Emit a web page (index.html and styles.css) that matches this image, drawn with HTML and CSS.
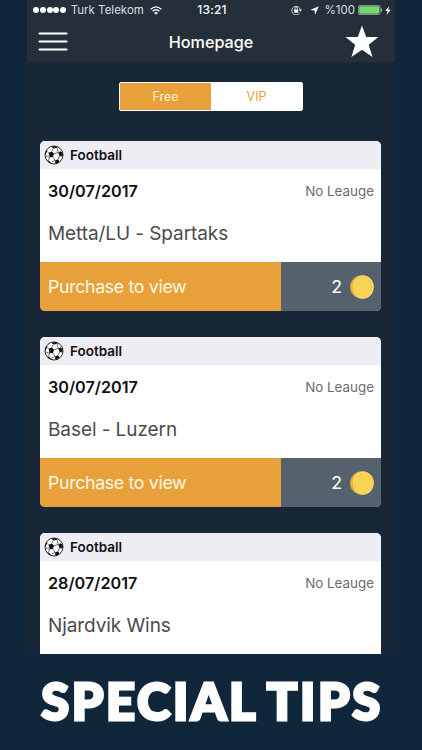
FILE: index.html
```
<!DOCTYPE html>
<html lang="en">
<head>
<meta charset="utf-8">
<title>Homepage</title>
<link rel="stylesheet" href="styles.css">
</head>
<body>
<svg class="defs" aria-hidden="true">
  <symbol id="ball" viewBox="0 0 20 20">
    <circle cx="10" cy="10" r="9" fill="#fff" stroke="#111" stroke-width=".9"/>
    <path d="M4.6 7.8 7.8 6.6 10 8.8 9 12.1 5.6 12.2ZM8.2 1.2 12.6 1.2 13.6 2.4 10.6 3.6 8 2.4ZM1.2 8.4 2.2 5.6 3.2 4.4 3 6.6 1.4 10ZM3 15.4 5.4 16 7.4 18.6 5 17.6ZM11 15.4 14 14.2 15.4 16.2 13.4 18.4 11.2 18ZM14.2 7.4 16.8 6.2 18.8 8.6 18.4 11.4 15.6 11Z" fill="#111"/>
    <path d="M7.8 6.6 9.4 3.2M3 6.2 4.6 7.8M1.6 11 5.6 12.2 4.6 15.8M9 12.1 11 15.4 7 17.4M10 8.8 14.2 7.4 13 2.4M15.6 11 14 14.2" fill="none" stroke="#222" stroke-width=".65"/>
  </symbol>
  <symbol id="coin" viewBox="0 0 24 24">
    <circle cx="11.9" cy="12" r="11.8" fill="#e3b23c"/>
    <ellipse cx="13.2" cy="12" rx="10.5" ry="11.6" fill="#fadb61"/>
    <ellipse cx="13.2" cy="12" rx="8.6" ry="9.5" fill="#f8d455" stroke="#e2b548" stroke-width=".8" stroke-dasharray="1.2 1.4"/>
  </symbol>
</svg>
<div class="phone">
  <header class="top">
    <div class="status">
      <div class="carrier">
        <span class="dots"><i></i><i></i><i></i><i></i><i></i></span>
        <span class="network">Turk Telekom</span>
        <svg width="12" height="9" viewBox="0 0 12 9"><path d="M.7 3.2Q6-1.5 11.3 3.2M2.6 5.2Q6 2.2 9.4 5.2" fill="none" stroke="#fff" stroke-width="1.3"/><path d="M4.1 6.8Q6 5.2 7.9 6.8L6 8.8Z" fill="#fff"/></svg>
      </div>
      <span class="time">13:21</span>
      <div class="power">
        <svg width="12" height="10" viewBox="0 0 12 10"><path d="M8.8 7.8A4.3 4.3 0 1 1 9.3 4.8" fill="none" stroke="#ddd" stroke-width=".9"/><path d="M7.7 4.6h3.5L9.4 6.8Z" fill="#ddd"/><path d="M3.2 4.5h4v3.2h-4z" fill="#fff"/><path d="M4 4.8V3.6a1.2 1.2 0 0 1 2.4 0v1.2" fill="none" stroke="#fff" stroke-width=".8"/></svg>
        <svg class="arrow" width="9" height="9" viewBox="0 0 9 9"><path d="M8.8.2 5 8.8 4.6 4.4.2 4Z" fill="#fff"/></svg>
        <span class="percent">%100</span>
        <svg class="battery" width="25" height="10" viewBox="0 0 25 10"><rect x=".4" y=".4" width="21.6" height="9.2" rx="1.5" fill="none" stroke="#a9b2b5" stroke-width=".8"/><rect x="1.2" y="1.2" width="20" height="7.6" rx=".7" fill="#76d671"/><path d="M22.8 3.3q1.5.2 1.5 1.7t-1.5 1.7Z" fill="#a9b2b5"/></svg>
        <svg class="bolt" width="6" height="9" viewBox="0 0 6 9"><path d="M4 .2.3 5h2.2L1.7 8.8 5.7 3.8H3.3Z" fill="#fff"/></svg>
      </div>
    </div>
    <nav class="bar">
      <svg width="30" height="20" viewBox="0 0 30 20"><path d="M1.5 1.6h27M1.5 9.6h27M1.5 17.5h27" stroke="#fff" stroke-width="2" stroke-linecap="round"/></svg>
      <h1>Homepage</h1>
      <svg width="34" height="33" viewBox="0 0 34 33"><path d="M17 .5 21.2 12H33.5L23.7 19.7 27.5 32 17 24.7 6.4 32 10.2 19.7.5 12H12.8Z" fill="#fff"/></svg>
    </nav>
  </header>
  <main class="feed">
    <div class="tabs"><span class="tab active">Free</span><span class="tab">VIP</span></div>
    <article class="card">
      <div class="sport"><svg width="20" height="20"><use href="#ball"/></svg><span>Football</span></div>
      <div class="info"><div class="meta"><b>30/07/2017</b><span>No Leauge</span></div><h2>Metta/LU - Spartaks</h2></div>
      <div class="buy"><span class="label">Purchase to view</span><span class="price">2<svg width="24" height="24"><use href="#coin"/></svg></span></div>
    </article>
    <article class="card">
      <div class="sport"><svg width="20" height="20"><use href="#ball"/></svg><span>Football</span></div>
      <div class="info"><div class="meta"><b>30/07/2017</b><span>No Leauge</span></div><h2>Basel - Luzern</h2></div>
      <div class="buy"><span class="label">Purchase to view</span><span class="price">2<svg width="24" height="24"><use href="#coin"/></svg></span></div>
    </article>
    <article class="card">
      <div class="sport"><svg width="20" height="20"><use href="#ball"/></svg><span>Football</span></div>
      <div class="info"><div class="meta"><b>28/07/2017</b><span>No Leauge</span></div><h2>Njardvik Wins</h2></div>
    </article>
  </main>
</div>
<div class="caption">SPECIAL TIPS</div>
</body>
</html>
```
FILE: styles.css
```
* { box-sizing: border-box; }
body { margin: 0; width: 422px; height: 750px; overflow: hidden; background: #10263b; font-family: Inter, "Liberation Sans", sans-serif; color: #fff; }
svg { display: block; flex: none; }
.defs { display: none; }
.phone { width: 368px; height: 654px; margin-left: 27px; overflow: hidden; background: #182738; }
.top { height: 63px; background: #252f39; border-bottom: 1px solid #1d2934; }
.status { height: 20px; display: grid; grid-template-columns: 1fr auto 1fr; align-items: center; padding: 0 4px 0 6px; font-size: 12px; line-height: 20px; }
.carrier, .power { display: flex; align-items: center; }
.power { justify-content: flex-end; }
.dots { display: flex; gap: .8px; margin-right: 4.5px; }
.dots i { width: 6px; height: 6px; border-radius: 50%; background: #fff; }
.network { color: #d9dde0; margin-right: 6px; font-size: 11.5px; letter-spacing: 0; }
.time { font-weight: 500; font-size: 12px; letter-spacing: .2px; }
.arrow { margin: 0 6px 0 7px; }
.percent { color: #d9dde0; font-size: 11.5px; }
.battery { margin-left: 3px; }
.bolt { margin-left: 2px; }
.bar { height: 42px; display: grid; grid-template-columns: 34px 1fr 34px; align-items: center; padding: 1px 16px 0 11px; }
.bar h1 { margin: 0; text-align: center; font-size: 16.2px; font-weight: 500; padding-left: 5px; }
.feed { padding: 19px 14px 0 13px; }
.tabs { width: 184px; height: 29px; margin: 0 auto 30px 79px; display: flex; border: 1px solid #fff; border-radius: 2px; background: #fff; overflow: hidden; }
.tab { flex: 1; text-align: center; font-size: 12.5px; line-height: 28px; color: #e8a13a; }
.tab.active { background: #e8a13a; color: #fff3d9; }
.card { height: 170px; margin-bottom: 26px; border-radius: 5px; background: #fff; overflow: hidden; }
.sport { height: 28px; display: flex; align-items: center; gap: 6px; padding-left: 4px; background: #efedf4; color: #111; font-size: 13.5px; font-weight: 600; }
.info { height: 93px; padding: 11px 7px 0 8px; }
.meta { display: flex; justify-content: space-between; align-items: center; height: 22px; }
.meta b { color: #111; font-size: 16.2px; font-weight: 600; }
.meta span { color: #6c6c6c; font-size: 13.4px; }
.info h2 { margin: 18px 0 0; color: #4b4b4b; font-size: 19px; line-height: 28px; font-weight: 400; letter-spacing: -.08px; }
.buy { height: 49px; display: flex; font-size: 17.8px; line-height: 50px; background: #55616c; }
.label { width: 241px; padding-left: 8px; background: #e8a13a; color: #fff8e6; letter-spacing: -.35px; }
.price { flex: 1; display: flex; align-items: center; justify-content: flex-end; gap: 8px; padding-right: 7px; }
.caption { width: 422px; height: 96px; padding-left: 2px; text-align: center; font-family: Lato, sans-serif; font-size: 50.5px; line-height: 94px; font-weight: 900; white-space: nowrap; -webkit-text-stroke: 3px #fff; stroke-linejoin: round; letter-spacing: 2.7px; word-spacing: -3px; }
```
